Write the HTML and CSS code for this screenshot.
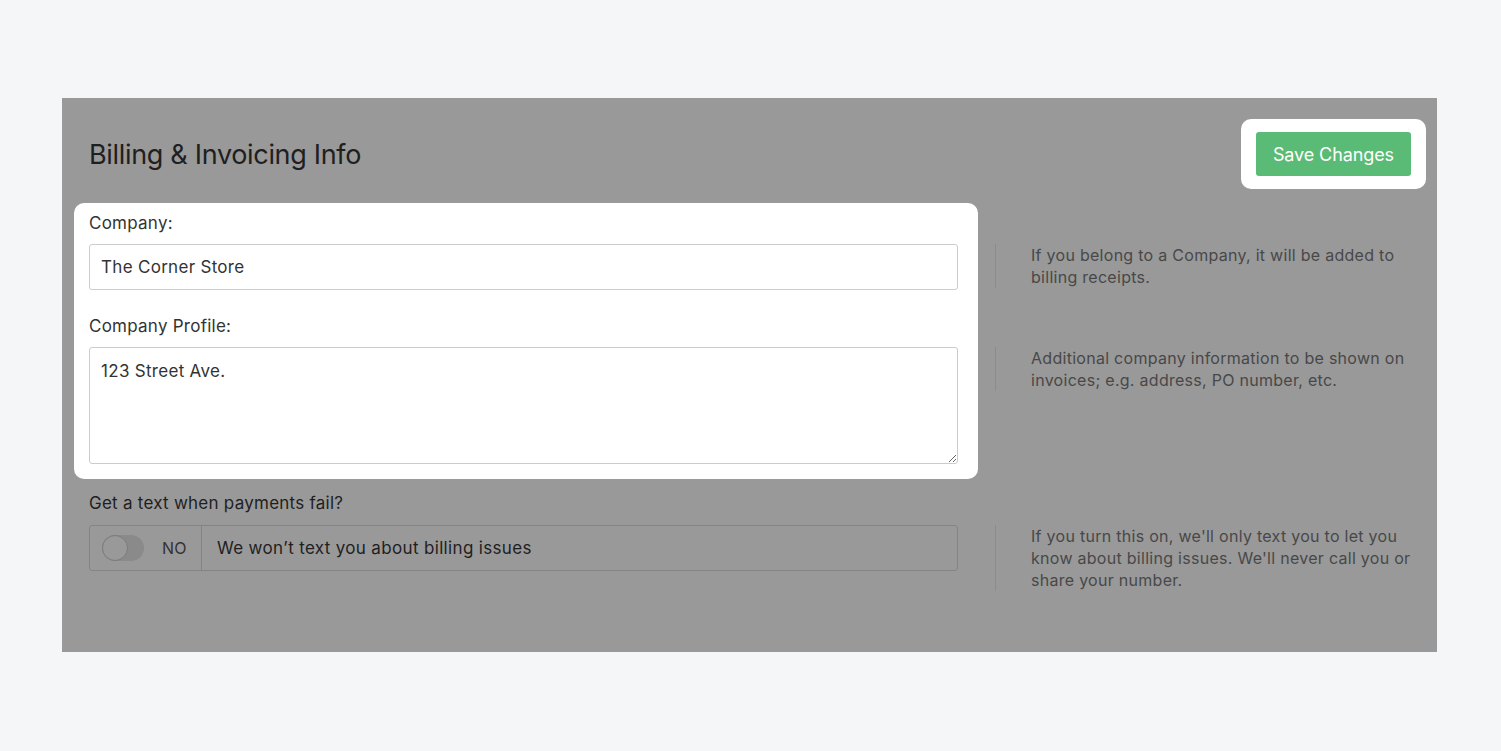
FILE: index.html
```html
<!DOCTYPE html>
<html lang="en">
<head>
<meta charset="utf-8">
<title>Billing &amp; Invoicing Info</title>
<link rel="stylesheet" href="styles.css">
</head>
<body>
<main class="panel">
  <header class="panel-head">
    <h1 class="title">Billing &amp; Invoicing Info</h1>
    <div class="spot spot-btn">
      <button class="save" type="button">Save Changes</button>
    </div>
  </header>
  <div class="body">
    <div class="fields">
      <div class="spot spot-card">
        <label class="label">Company:</label>
        <input class="input" type="text" value="The Corner Store">
        <label class="label label-2">Company Profile:</label>
        <textarea class="textarea">123 Street Ave.</textarea>
      </div>
      <label class="label label-dim">Get a text when payments fail?</label>
      <div class="toggle-group">
        <div class="toggle-seg">
          <span class="switch"><span class="knob"></span></span>
          <span class="no">NO</span>
        </div>
        <div class="toggle-text">We won’t text you about billing issues</div>
      </div>
    </div>
    <aside class="helps">
      <p class="help help-1">If you belong to a Company, it will be added to billing receipts.</p>
      <p class="help help-2">Additional company information to be shown on invoices; e.g. address, PO number, etc.</p>
      <p class="help help-3">If you turn this on, we'll only text you to let you know about billing issues. We'll never call you or share your number.</p>
    </aside>
  </div>
</main>
</body>
</html>
```

FILE: styles.css
```css
* { box-sizing: border-box; }
html, body { margin: 0; padding: 0; }
body {
  background: #f5f6f8;
  font-family: Inter, "Noto Sans", sans-serif;
  color: #333;
  padding: 98px 64px 0 62px;
  height: 751px;
  overflow: hidden;
}
.panel {
  background: #999999;
  height: 554px;
  padding: 21px 26px 0 27px;
}
.panel-head {
  display: flex;
  justify-content: space-between;
  align-items: center;
  height: 70px;
}
.title {
  margin: 0;
  font-size: 27px;
  font-weight: 400;
  color: #1f1f1f;
  letter-spacing: -0.32px;
}
.spot {
  background: #fff;
  border-radius: 10px;
}
.spot-btn {
  padding: 13px 15px;
  margin-right: -15px;
}
.save {
  display: block;
  height: 44px;
  padding: 0 17px;
  border: 0;
  border-radius: 3px;
  background: #5abb76;
  color: #fff;
  font-family: Inter, "Noto Sans", sans-serif;
  font-size: 18px;
  letter-spacing: -0.1px;
}
.body {
  display: flex;
  margin-top: 14px;
}
.fields {
  width: 869px;
  flex: none;
}
.spot-card {
  margin: 0 -20px 0 -15px;
  padding: 8px 20px 15px 15px;
  display: flex;
  flex-direction: column;
}
.label {
  display: block;
  font-size: 17px;
  line-height: 24px;
  letter-spacing: 0.25px;
  color: #333;
  margin-bottom: 9px;
}
.label-2 { margin-top: 24px; }
.label-dim {
  color: #1f1f1f;
  margin-top: 12px;
  margin-bottom: 10px;
}
.input, .textarea {
  width: 869px;
  border: 1px solid #cccccc;
  border-radius: 3px;
  font-family: Inter, "Noto Sans", sans-serif;
  font-size: 17px;
  letter-spacing: 0.3px;
  color: #333;
  padding: 0 11px;
  background: #fff;
}
.input { height: 46px; }
.textarea {
  height: 117px;
  padding-top: 11px;
  line-height: 24px;
  resize: vertical;
}
.toggle-group {
  display: flex;
  height: 46px;
  border: 1px solid #848484;
  border-radius: 3px;
}
.toggle-seg {
  display: flex;
  align-items: center;
  width: 112px;
  padding-left: 12px;
  border-right: 1px solid #848484;
}
.switch {
  position: relative;
  width: 42px;
  height: 26px;
  border-radius: 13px;
  background: #8a8a8a;
  flex: none;
}
.knob {
  position: absolute;
  left: 0;
  top: 0;
  width: 26px;
  height: 26px;
  border-radius: 50%;
  background: #999;
  border: 1px solid #7c7c7c;
}
.no {
  margin-left: 18px;
  font-size: 16px;
  letter-spacing: 0.3px;
  color: #333;
}
.toggle-text {
  display: flex;
  align-items: center;
  padding-left: 15px;
  font-size: 17px;
  letter-spacing: 0.34px;
  color: #1f1f1f;
}
.helps {
  margin-left: 37px;
  width: 416px;
  display: flex;
  flex-direction: column;
}
.help {
  margin: 0;
  border-left: 1px solid #8c8c8c;
  padding-left: 35px;
  font-size: 16px;
  line-height: 22px;
  letter-spacing: 0.28px;
  color: #484848;
}
.help-1 { margin-top: 41px; }
.help-2 { margin-top: 59px; }
.help-3 { margin-top: 134px; }
```
